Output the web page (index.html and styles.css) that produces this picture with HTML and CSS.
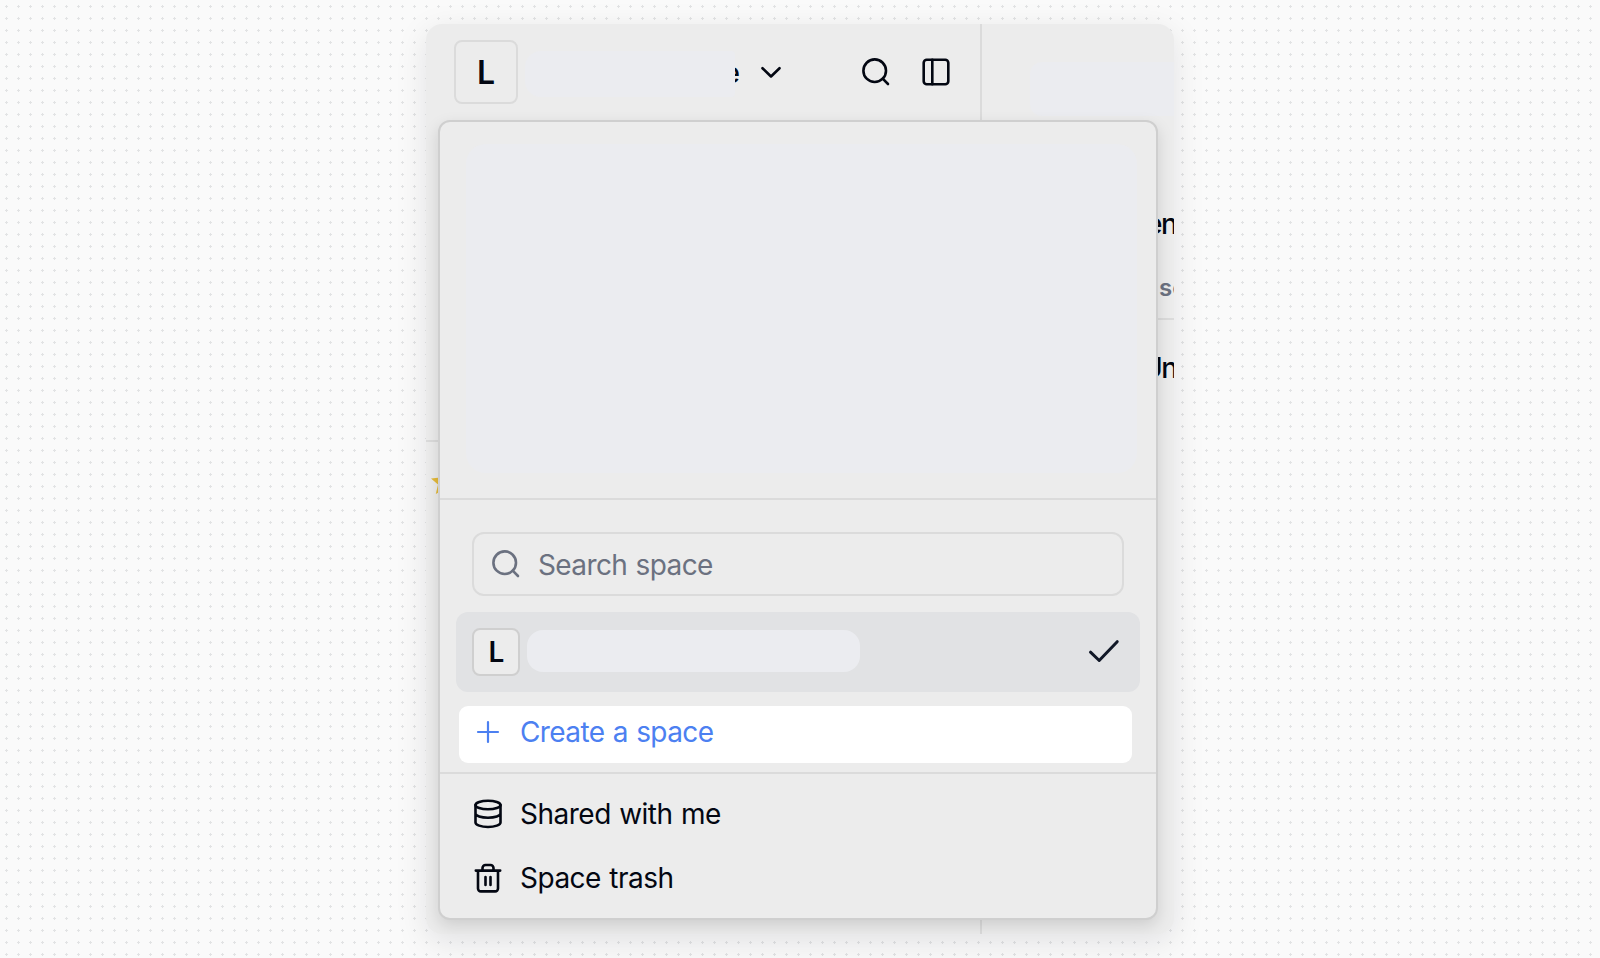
FILE: index.html
```html
<!DOCTYPE html>
<html lang="en">
<head>
  <meta charset="UTF-8" />
  <title>Spaces</title>
  <link rel="stylesheet" href="styles.css">
</head>
<body>
  <div class="window">
    <aside class="sidebar">
      <header class="topbar">
        <span class="avatar">L</span>
        <div class="space-name">e<span class="mask"></span></div>
        <svg class="chevron" width="24" height="24" viewBox="0 0 24 24"><path d="M3.5 8.200l8.500 8.300 8.500-8.300"/></svg>
        <svg class="search" width="32" height="32" viewBox="0 0 32 32"><circle cx="14.700" cy="14.700" r="11.300"/><path d="M22.700 22.700L28 28"/></svg>
        <svg width="32" height="32" viewBox="0 0 32 32"><rect x="3.700" y="3.700" width="24.600" height="24.600" rx="3"/><path d="M12.300 3.700v24.600"/></svg>
      </header>
      <div class="favorites">
        <svg class="star" width="28" height="28" viewBox="0 0 28 28"><path d="M14 1l3.800 8.500 9.200.9-7 6.200 2.200 9.400-8.200-4.600L5.800 26 8 16.600l-7-6.200 9.200-.9z"/></svg>
      </div>
    </aside>
    <main class="content">
      <div class="content-head"><span class="mask"></span></div>
      <p class="title">en</p>
      <p class="sub">so</p>
      <p class="item">Un</p>
    </main>

    <div class="menu">
      <div class="account"><span class="mask"></span></div>
      <div class="spaces">
        <div class="search-box">
          <svg width="32" height="32" viewBox="0 0 32 32"><circle cx="14.700" cy="14.700" r="11.300"/><path d="M22.700 22.700L28 28"/></svg>
          <span>Search space</span>
        </div>
        <div class="space-row">
          <span class="avatar small">L</span>
          <span class="mask"></span>
          <svg class="check" width="32" height="32" viewBox="0 0 32 32"><path d="M2.500 16.200l8.700 8.300L29.200 5.700"/></svg>
        </div>
        <div class="create">
          <svg width="32" height="32" viewBox="0 0 32 32"><path d="M16 6v20M6 16h20"/></svg>
          <span>Create a space</span>
        </div>
      </div>
      <div class="links">
        <div class="link">
          <svg width="32" height="32" viewBox="0 0 32 32"><ellipse cx="16" cy="7" rx="12.500" ry="4.300"/><path d="M3.500 7v17.500c0 2.400 5.600 4.500 12.500 4.500s12.500-2.100 12.500-4.500V7M3.500 15.600c0 2.300 5.600 4.100 12.500 4.100s12.500-1.800 12.500-4.100"/></svg>
          <span>Shared with me</span>
        </div>
        <div class="link">
          <svg width="32" height="32" viewBox="0 0 32 32"><path d="M3.800 8.600h24.400M6 8.600v18a2.800 2.800 0 0 0 2.800 2.800h14.400a2.800 2.800 0 0 0 2.800-2.800v-18M10.500 8.600V6a3 3 0 0 1 3-3h5a3 3 0 0 1 3 3v2.600M13.500 15v8M18.500 15v8"/></svg>
          <span>Space trash</span>
        </div>
      </div>
    </div>
  </div>
</body>
</html>
```

FILE: styles.css
```css
* {
  box-sizing: border-box;
}
body {
  margin: 0;
  height: 958px;
  padding: 24px 426px;
  overflow: hidden;
  font-family: Inter, sans-serif;
  font-size: 28px;
  line-height: 34px;
  color: #030712;
  background-color: #fafafa;
  background-image: radial-gradient(circle at 6.5px 6.5px, #e2e3e4 0 1.1px, transparent 1.3px);
  background-size: 12px 12px;
}
svg {
  flex: none;
  display: block;
  fill: none;
  stroke: currentColor;
  stroke-width: 2.6;
  stroke-linecap: round;
  stroke-linejoin: round;
}
p {
  margin: 0;
}
.mask {
  display: block;
  background: #ebecf0;
}
.window {
  position: relative;
  display: flex;
  width: 748px;
  height: 910px;
  overflow: hidden;
  border-radius: 16px;
  background: #ececec;
  box-shadow: 0 8px 32px rgba(0, 0, 30, 0.1);
}

/* left column */
.sidebar {
  flex: none;
  width: 556px;
  border-right: 2px solid #dbdbdb;
}
.topbar {
  display: flex;
  align-items: center;
  height: 96px;
  padding-left: 28px;
}
.avatar {
  display: flex;
  align-items: center;
  justify-content: center;
  width: 64px;
  height: 64px;
  padding-top: 2px;
  border: 2px solid #dbdbdb;
  border-radius: 8px;
  font-size: 32px;
  font-weight: 600;
}
.avatar.small {
  width: 48px;
  height: 48px;
  padding-top: 0;
  border-color: #cfcfcf;
  background: #ececec;
  font-size: 28px;
}
.space-name {
  position: relative;
  width: 215px;
  margin-left: 7px;
  padding-top: 2px;
  text-align: right;
  font-weight: 500;
}
.space-name .mask {
  position: absolute;
  top: -3px;
  left: 0;
  width: 210px;
  height: 46px;
  border-radius: 16px 4px 4px 16px;
}
.chevron {
  margin-left: 19px;
}
.search {
  margin: 0 28px 0 77px;
}
.favorites {
  margin-top: 320px;
  padding-top: 26px;
  border-top: 2px solid #dbdbdb;
}
.star {
  margin-left: 4px;
  fill: #e3b93a;
  stroke: none;
}

/* right column */
.content {
  flex: 1;
  min-width: 0;
}
.content-head {
  height: 168px;
  padding: 38px 0 0 48px;
}
.content-head .mask {
  height: 54px;
  border-radius: 12px 0 0 12px;
}
.title,
.item {
  font-weight: 500;
  letter-spacing: -1.5px;
}
.title {
  margin-top: 15px;
  padding-left: 164px;
}
.sub {
  margin-top: 30px;
  padding: 0 0 13px 177px;
  border-bottom: 2px solid #dbdbdb;
  font-size: 24px;
  font-weight: 600;
  color: #6b7180;
}
.item {
  margin-top: 31px;
  padding-left: 160px;
}

/* space switcher, lies over both columns */
.menu {
  position: absolute;
  top: 96px;
  left: 12px;
  width: 720px;
  height: 800px;
  border: 2px solid #cfcfcf;
  border-radius: 12px;
  background: #ececec;
  box-shadow: 0 6px 16px rgba(0, 0, 0, 0.13);
  letter-spacing: -0.6px;
  word-spacing: 1px;
}
.account {
  height: 378px;
  padding: 22px 19px 25px 26px;
  border-bottom: 2px solid #dbdbdb;
}
.account .mask {
  height: 329px;
  border-radius: 20px;
}
.spaces {
  height: 274px;
  padding: 32px 16px 0;
  border-bottom: 2px solid #dbdbdb;
}
.search-box {
  display: flex;
  align-items: center;
  height: 64px;
  margin: 0 16px 16px;
  padding-left: 16px;
  gap: 16px;
  border: 2px solid #dbdbdb;
  border-radius: 12px;
  color: #6b7180;
}
.search-box span {
  padding-top: 2px;
}
.space-row {
  display: flex;
  align-items: center;
  height: 80px;
  padding: 0 20px 0 16px;
  border-radius: 12px;
  background: #e1e2e4;
}
.space-row .mask {
  width: 333px;
  height: 42px;
  margin: 0 0 2px 7px;
  border-radius: 16px;
}
.check {
  margin-left: auto;
  stroke-width: 3;
  color: #111827;
}
.create {
  display: flex;
  align-items: center;
  height: 57px;
  margin: 14px 8px 0 3px;
  padding: 0 13px 5px;
  gap: 16px;
  border-radius: 9px;
  background: #fff;
  color: #4c80f1;
}
.create svg {
  stroke-width: 2.2;
}
.links {
  padding: 8px 32px;
  letter-spacing: -0.5px;
}
.link {
  display: flex;
  align-items: center;
  height: 64px;
  gap: 16px;
}
```
